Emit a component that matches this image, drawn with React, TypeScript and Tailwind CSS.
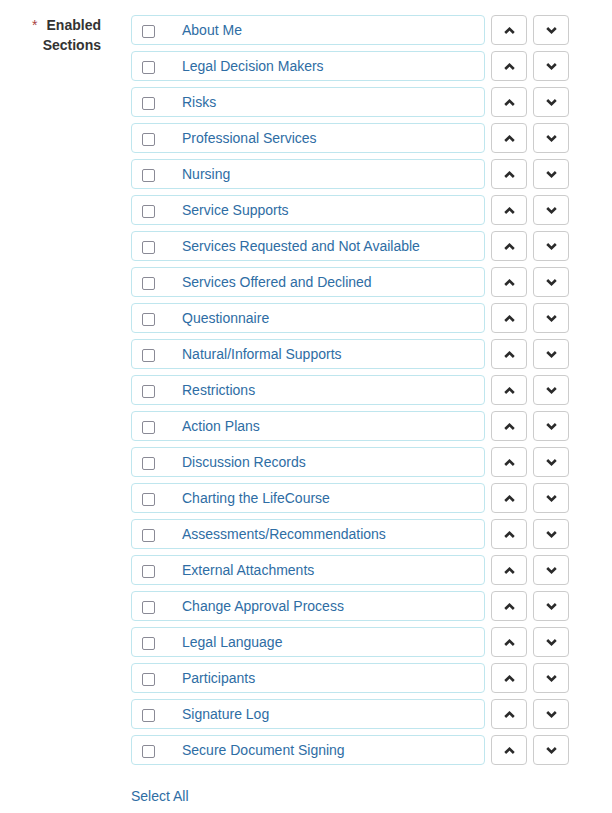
import React from "react";

const sections = [
  "About Me",
  "Legal Decision Makers",
  "Risks",
  "Professional Services",
  "Nursing",
  "Service Supports",
  "Services Requested and Not Available",
  "Services Offered and Declined",
  "Questionnaire",
  "Natural/Informal Supports",
  "Restrictions",
  "Action Plans",
  "Discussion Records",
  "Charting the LifeCourse",
  "Assessments/Recommendations",
  "External Attachments",
  "Change Approval Process",
  "Legal Language",
  "Participants",
  "Signature Log",
  "Secure Document Signing",
];

function Up() {
  return (
    <svg width="11" height="7" viewBox="0 0 11 7">
      <polyline points="1.2,6 5.5,1.8 9.8,6" fill="none" stroke="#2b2b2b" strokeWidth="2.6" />
    </svg>
  );
}
function Down() {
  return (
    <svg width="11" height="7" viewBox="0 0 11 7">
      <polyline points="1.2,1 5.5,5.2 9.8,1" fill="none" stroke="#2b2b2b" strokeWidth="2.6" />
    </svg>
  );
}

export default function App() {
  return (
    <div
      className="flex w-[612px] min-h-[813px] bg-white text-[14px] leading-[20px] text-[#333]"
      style={{ fontFamily: '"Liberation Sans", Arial, sans-serif' }}
    >
      <div className="w-[101px] shrink-0 pt-[15px] text-right font-bold">
        <span className="text-[#a94442] font-normal mr-[9px]">*</span>Enabled
        <br />
        Sections
      </div>
      <div className="ml-[30px] pt-[15px] flex flex-col">
        <div className="flex flex-col gap-[6px]">
          {sections.map((s) => (
            <div key={s} className="flex gap-[6px]">
              <label className="w-[354px] h-[30px] flex items-center border border-[#bfe6ee] rounded-[4px] pl-[10px]">
                <span className="w-[13px] h-[13px] shrink-0 border border-[#8a8a96] rounded-[2px] bg-white mt-[3px]" />
                <span className="ml-[27px] text-[#2e6da4]">{s}</span>
              </label>
              <button className="w-[36px] h-[30px] flex items-center justify-center border border-[#cccccc] rounded-[4px] bg-white">
                <Up />
              </button>
              <button className="w-[36px] h-[30px] flex items-center justify-center border border-[#cccccc] rounded-[4px] bg-white">
                <Down />
              </button>
            </div>
          ))}
        </div>
        <div className="mt-[21px] text-[#2e6da4]">Select All</div>
      </div>
    </div>
  );
}
